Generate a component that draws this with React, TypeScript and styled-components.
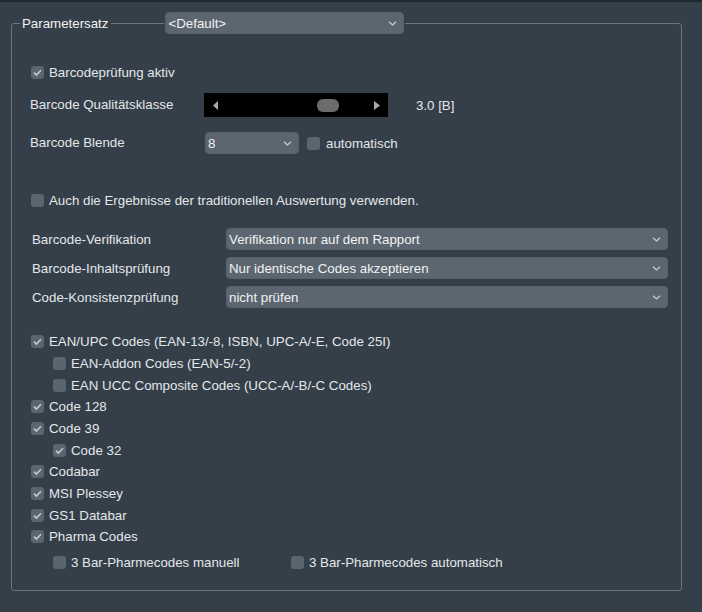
import React from 'react'
import styled, { createGlobalStyle } from 'styled-components'

const GlobalStyle = createGlobalStyle`
  html, body {
    margin: 0;
    padding: 0;
    background: #343f49;
  }
  body {
    font-family: "Liberation Sans", Arial, sans-serif;
    font-size: 13.3px;
    color: #e4e7ea;
  }
`

interface CheckItem {
  label: string
  checked: boolean
  indent?: boolean
}

const codeList: CheckItem[] = [
  { label: 'EAN/UPC Codes (EAN-13/-8, ISBN, UPC-A/-E, Code 25I)', checked: true },
  { label: 'EAN-Addon Codes (EAN-5/-2)', checked: false, indent: true },
  { label: 'EAN UCC Composite Codes (UCC-A/-B/-C Codes)', checked: false, indent: true },
  { label: 'Code 128', checked: true },
  { label: 'Code 39', checked: true },
  { label: 'Code 32', checked: true, indent: true },
  { label: 'Codabar', checked: true },
  { label: 'MSI Plessey', checked: true },
  { label: 'GS1 Databar', checked: true },
  { label: 'Pharma Codes', checked: true },
]

const comboRows = [
  { label: 'Barcode-Verifikation', value: 'Verifikation nur auf dem Rapport' },
  { label: 'Barcode-Inhaltsprüfung', value: 'Nur identische Codes akzeptieren' },
  { label: 'Code-Konsistenzprüfung', value: 'nicht prüfen' },
]

// kleines Chevron für die Combobox
const Chevron: React.FC = () => (
  <svg width="9" height="5" viewBox="0 0 9 5">
    <polyline points="1,0.8 4.5,4 8,0.8" fill="none" stroke="#c9cdd1" strokeWidth="1.2" />
  </svg>
)

const Combo: React.FC<{ value: string, width: number }> = ({ value, width }) => (
  <StyledCombo $width={width}>
    <span>{value}</span>
    <Chevron />
  </StyledCombo>
)

const CheckBox: React.FC<{ checked: boolean }> = ({ checked }) => (
  <StyledBox>
    {checked ? (
      <svg width="13" height="13" viewBox="0 0 13 13">
        <polyline points="3,6.6 5.4,9 10,4.2" fill="none" stroke="#c6cacd" strokeWidth="1.6" />
      </svg>
    ) : null}
  </StyledBox>
)

const Check: React.FC<{ label: string, checked: boolean, indent?: boolean }> = ({ label, checked, indent }) => (
  <StyledCheck $indent={!!indent}>
    <CheckBox checked={checked} />
    <span>{label}</span>
  </StyledCheck>
)

// Schieberegler, Daumenposition aus dem Wert berechnet
const Slider: React.FC<{ value: number, min: number, max: number }> = ({ value, min, max }) => {
  const ratio = (value - min) / (max - min)
  return (
    <StyledSlider>
      <svg width="5" height="9" viewBox="0 0 5 9"><polygon points="5,0 5,9 0,4.5" fill="#a9a9a9" /></svg>
      <StyledTrack>
        <StyledThumb style={{ left: `calc(${ratio * 100}% - ${ratio * 22}px)` }} />
      </StyledTrack>
      <svg width="6" height="9" viewBox="0 0 6 9"><polygon points="0,0 0,9 6,4.5" fill="#a9a9a9" /></svg>
    </StyledSlider>
  )
}

const App: React.FC = () => {
  return (
    <StyledPage>
      <GlobalStyle />
      <StyledFrame>
        <StyledLegend>
          <StyledLegendTitle>Parametersatz</StyledLegendTitle>
          <StyledLegendLine />
          <Combo value="<Default>" width={239} />
        </StyledLegend>

        <StyledContent>
          <StyledRow $top={27}>
            <Check label="Barcodeprüfung aktiv" checked />
          </StyledRow>
          <StyledRow $top={10}>
            <StyledLabel $width={174}>Barcode Qualitätsklasse</StyledLabel>
            <Slider value={3} min={0} max={4} />
            <StyledValue>3.0 [B]</StyledValue>
          </StyledRow>
          <StyledRow $top={15}>
            <StyledLabel $width={175}>Barcode Blende</StyledLabel>
            <Combo value="8" width={94} />
            <StyledInlineCheck>
              <Check label="automatisch" checked={false} />
            </StyledInlineCheck>
          </StyledRow>
          <StyledRow $top={35}>
            <Check label="Auch die Ergebnisse der traditionellen Auswertung verwenden." checked={false} />
          </StyledRow>

          <StyledComboGrid>
            {comboRows.map(row => (
              <React.Fragment key={row.label}>
                <StyledGridLabel>{row.label}</StyledGridLabel>
                <Combo value={row.value} width={442} />
              </React.Fragment>
            ))}
          </StyledComboGrid>

          <StyledList>
            {codeList.map(item => (
              <Check key={item.label} label={item.label} checked={item.checked} indent={item.indent} />
            ))}
          </StyledList>

          <StyledPharmaRow>
            <StyledPharmaCol>
              <Check label="3 Bar-Pharmecodes manuell" checked={false} indent />
            </StyledPharmaCol>
            <Check label="3 Bar-Pharmecodes automatisch" checked={false} />
          </StyledPharmaRow>
        </StyledContent>
      </StyledFrame>
    </StyledPage>
  )
}

const StyledPage = styled.div`
  height: 610px;
  border-top: 2px solid #1f2830;
  overflow: hidden;
`

const StyledFrame = styled.fieldset`
  box-sizing: border-box;
  margin: 10px 0 0 11px;
  padding: 0;
  width: 671px;
  border: 1px solid #6c757d;
  border-radius: 3px;
  min-inline-size: 0;
`

const StyledLegend = styled.legend`
  display: flex;
  align-items: center;
  margin-left: 8px;
  padding: 0 1px 0 2px;
`

const StyledLegendTitle = styled.span`
  color: #f2f2f2;
  padding-right: 3px;
`

const StyledLegendLine = styled.span`
  width: 53px;
  height: 1px;
  background: #6c757d;
  margin-right: 1px;
`

const StyledCombo = styled.div<{ $width: number }>`
  box-sizing: border-box;
  width: ${props => props.$width}px;
  height: 22px;
  display: flex;
  align-items: center;
  justify-content: space-between;
  padding: 0 6px 0 2px;
  background: #5b6670;
  border: 1px solid #56616a;
  border-radius: 4px;
  color: #f2f2f2;
  white-space: nowrap;
  svg {
    flex-shrink: 0;
  }
`

const StyledBox = styled.span`
  width: 13px;
  height: 13px;
  flex-shrink: 0;
  border-radius: 3px;
  background: #5b6570;
  display: flex;
  svg {
    display: block;
  }
`

const StyledCheck = styled.div<{ $indent: boolean }>`
  display: flex;
  align-items: center;
  gap: 5px;
  height: 21.67px;
  padding-left: ${props => props.$indent ? 22 : 0}px;
  white-space: nowrap;
`

const StyledContent = styled.div`
  padding: 0 0 17px 19px;
`

const StyledRow = styled.div<{ $top: number }>`
  display: flex;
  align-items: center;
  margin-top: ${props => props.$top}px;
  min-height: 22px;
`

const StyledLabel = styled.span<{ $width: number }>`
  width: ${props => props.$width}px;
  margin-left: -1px;
  margin-top: -2px;
`

const StyledSlider = styled.div`
  box-sizing: border-box;
  width: 184px;
  height: 24px;
  background: #000;
  display: flex;
  align-items: center;
  padding: 0 8px 0 9px;
  gap: 2px;
`

const StyledTrack = styled.div`
  position: relative;
  flex: 1;
  height: 13px;
  margin: 0 1px;
`

const StyledThumb = styled.div`
  position: absolute;
  top: 0;
  width: 22px;
  height: 13px;
  border-radius: 6px;
  background: #6b6b6b;
`

const StyledValue = styled.span`
  margin-left: 28px;
`

const StyledInlineCheck = styled.div`
  margin-left: 8px;
  span + span {
    margin-left: 1px;
  }
`

const StyledComboGrid = styled.div`
  display: grid;
  grid-template-columns: 195px 442px;
  row-gap: 7px;
  align-items: center;
  margin-top: 17px;
`

const StyledGridLabel = styled.span`
  padding-left: 1px;
  margin-top: 1px;
`

const StyledList = styled.div`
  margin-top: 23px;
`

const StyledPharmaRow = styled.div`
  display: flex;
  margin-top: 4px;
`

const StyledPharmaCol = styled.div`
  width: 260px;
`

export default App
